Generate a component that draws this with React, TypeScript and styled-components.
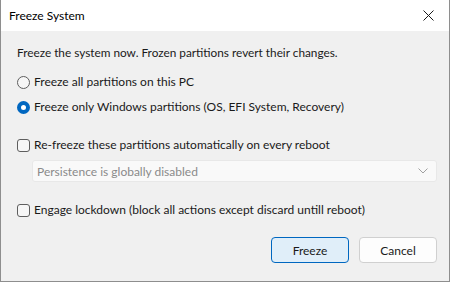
import React from 'react';
import styled, { createGlobalStyle } from 'styled-components';

const GlobalStyle = createGlobalStyle`
  html, body {
    margin: 0;
    padding: 0;
    background: #ffffff;
  }
  body {
    font-family: Lato, "Noto Sans", Arial, sans-serif;
    font-size: 12px;
    color: #1a1a1a;
  }
`;

const Window = styled.div`
  width: 450px;
  height: 282px;
  box-sizing: border-box;
  border: 1px solid #8e8e8e;
  border-top: none;
  display: flex;
  flex-direction: column;
  background: #f0f0f0;
`;

const TitleBar = styled.div`
  height: 31px;
  flex: 0 0 31px;
  background: #ffffff;
  display: flex;
  align-items: center;
  justify-content: space-between;
  padding: 0 8px 0 8px;
`;

const Title = styled.span`
  font-size: 12px;
  color: #000;
  line-height: 16px;
  margin-top: 1px;
`;

const CloseButton = styled.div`
  width: 24px;
  height: 24px;
  display: flex;
  align-items: center;
  justify-content: center;
  margin-right: 1px;
`;

const Body = styled.div`
  flex: 1;
  display: flex;
  flex-direction: column;
  padding: 14px 12px 0 16px;
`;

const Text = styled.div<{ $gap?: number }>`
  font-size: 11.8px;
  line-height: 16px;
  margin-top: ${p => p.$gap ?? 0}px;
  white-space: nowrap;
`;

const OptionRow = styled.label<{ $gap: number }>`
  display: flex;
  align-items: center;
  height: 16px;
  line-height: 16px;
  margin-top: ${p => p.$gap}px;
  white-space: nowrap;
`;

const Radio = styled.span<{ $checked?: boolean }>`
  box-sizing: border-box;
  width: 13px;
  height: 13px;
  border-radius: 50%;
  margin-right: 4px;
  flex: 0 0 13px;
  border: ${p => (p.$checked ? '4px solid #0067c0' : '1px solid #5e5e5e')};
  background: ${p => (p.$checked ? '#ffffff' : '#f6f6f6')};
`;

const Check = styled.span`
  box-sizing: border-box;
  width: 13px;
  height: 13px;
  border-radius: 3px;
  margin-right: 4px;
  flex: 0 0 13px;
  border: 1px solid #5e5e5e;
  background: #f6f6f6;
`;

const Select = styled.div`
  margin: 7px 0 0 15px;
  height: 22px;
  box-sizing: border-box;
  border: 1px solid #e8e8e8;
  border-radius: 3px;
  background: #f9f9f9;
  display: flex;
  align-items: center;
  justify-content: space-between;
  padding: 0 8px 0 4px;
  color: #8a8a8a;
`;

const Buttons = styled.div`
  display: flex;
  justify-content: flex-end;
  gap: 10px;
  margin-top: 19px;
`;

const Button = styled.button<{ $primary?: boolean }>`
  width: 78px;
  height: 26px;
  box-sizing: border-box;
  font-family: inherit;
  font-size: 12px;
  color: #1a1a1a;
  border-radius: 4px;
  border: 1px solid ${p => (p.$primary ? '#0067c0' : '#d0d0d0')};
  background: ${p => (p.$primary ? '#e0eef9' : '#fdfdfd')};
  padding: 0;
`;

const App: React.FC = () => {
  return (
    <>
      <GlobalStyle />
      <Window>
        <TitleBar>
          <Title>Freeze System</Title>
          <CloseButton>
            <svg width="11" height="11" viewBox="0 0 11 11">
              <path d="M0.5 0.5 L10.5 10.5 M10.5 0.5 L0.5 10.5" stroke="#1a1a1a" strokeWidth="1" fill="none" />
            </svg>
          </CloseButton>
        </TitleBar>
        <Body>
          <Text>Freeze the system now. Frozen partitions revert their changes.</Text>
          <OptionRow $gap={13}>
            <Radio />
            Freeze all partitions on this PC
          </OptionRow>
          <OptionRow $gap={9}>
            <Radio $checked />
            Freeze only Windows partitions (OS, EFI System, Recovery)
          </OptionRow>
          <OptionRow $gap={22}>
            <Check />
            Re-freeze these partitions automatically on every reboot
          </OptionRow>
          <Select>
            <span>Persistence is globally disabled</span>
            <svg width="10" height="6" viewBox="0 0 10 6">
              <path d="M0.5 0.5 L5 5 L9.5 0.5" stroke="#a0a0a0" strokeWidth="1" fill="none" />
            </svg>
          </Select>
          <OptionRow $gap={20}>
            <Check />
            Engage lockdown (block all actions except discard untill reboot)
          </OptionRow>
          <Buttons>
            <Button $primary>Freeze</Button>
            <Button>Cancel</Button>
          </Buttons>
        </Body>
      </Window>
    </>
  );
};

export default App;
